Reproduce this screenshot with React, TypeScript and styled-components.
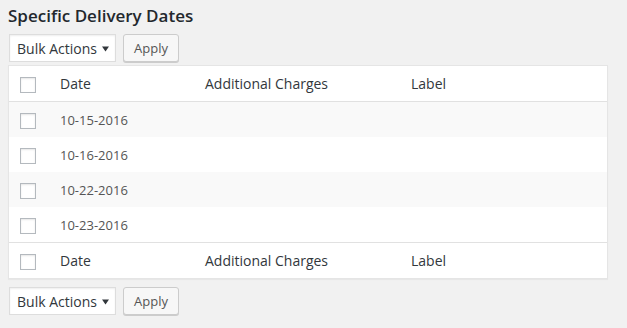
import React from "react";
import styled, { createGlobalStyle } from "styled-components";

const GlobalStyle = createGlobalStyle`
  html, body {
    margin: 0;
    padding: 0;
    background: #f1f1f1;
  }
  body {
    font-family: "Open Sans", "Liberation Sans", Arial, sans-serif;
    color: #444;
    -webkit-font-smoothing: antialiased;
  }
`;

const Wrap = styled.div`
  padding: 0 19px 0 8px;
`;

const Title = styled.h2`
  margin: 0;
  padding-top: 4px;
  font-size: 17px;
  line-height: 24px;
  font-weight: 600;
  color: #23282d;
`;

const TableNav = styled.div<{ $top?: boolean }>`
  display: flex;
  align-items: flex-start;
  gap: 6px;
  height: 30px;
  margin-top: ${(p) => (p.$top ? "5px" : "7px")};
  margin-bottom: ${(p) => (p.$top ? "2px" : "0")};
`;

const Select = styled.div`
  margin: 1px;
  box-sizing: border-box;
  width: 107px;
  height: 28px;
  display: flex;
  align-items: center;
  justify-content: space-between;
  padding: 0 6px 0 7px;
  background: #fff;
  border: 1px solid #ddd;
  box-shadow: inset 0 1px 2px rgba(0, 0, 0, 0.07);
  font-size: 14px;
  color: #32373c;
`;

const Arrow = styled.svg`
  width: 7px;
  height: 6px;
  margin-top: 1px;
`;

const Button = styled.button`
  margin-top: 1px;
  box-sizing: border-box;
  height: 28px;
  padding: 0 10px 1px;
  line-height: 26px;
  font-family: inherit;
  font-size: 13px;
  color: #555;
  background: #f7f7f7;
  border: 1px solid #ccc;
  border-radius: 3px;
  box-shadow: 0 1px 0 #ccc;
  cursor: pointer;
`;

const Table = styled.div`
  background: #fff;
  border: 1px solid #e5e5e5;
  box-shadow: 0 1px 1px rgba(0, 0, 0, 0.04);
`;

const Row = styled.div<{ $kind: "head" | "foot" | "odd" | "even" }>`
  display: grid;
  grid-template-columns: 41px 145px 206px 1fr;
  height: 35px;
  background: ${(p) => (p.$kind === "odd" ? "#f9f9f9" : "#fff")};
  border-bottom: ${(p) => (p.$kind === "head" ? "1px solid #e1e1e1" : "none")};
  border-top: ${(p) => (p.$kind === "foot" ? "1px solid #e1e1e1" : "none")};
  font-size: ${(p) => (p.$kind === "head" || p.$kind === "foot" ? "14px" : "13px")};
  color: ${(p) => (p.$kind === "head" || p.$kind === "foot" ? "#32373c" : "#555")};
`;

const Cell = styled.div`
  display: flex;
  align-items: center;
  padding: 0 10px;
  white-space: nowrap;
`;

const CheckCell = styled.div`
  display: flex;
  align-items: center;
  padding: 3px 0 0 11px;
`;

const Checkbox = styled.span`
  box-sizing: border-box;
  width: 16px;
  height: 16px;
  background: #fff;
  border: 1px solid #b4b9be;
  box-shadow: inset 0 1px 2px rgba(0, 0, 0, 0.1);
`;

const Nav = () => (
  <>
    <Select>
      <span>Bulk Actions</span>
      <Arrow viewBox="0 0 7 6">
        <polygon points="0,0.5 7,0.5 3.5,5.5" fill="#32373c" />
      </Arrow>
    </Select>
    <Button>Apply</Button>
  </>
);

const dates = ["10-15-2016", "10-16-2016", "10-22-2016", "10-23-2016"];

const HeaderCells = () => (
  <>
    <CheckCell>
      <Checkbox />
    </CheckCell>
    <Cell>Date</Cell>
    <Cell>Additional Charges</Cell>
    <Cell>Label</Cell>
  </>
);

export default function App() {
  return (
    <>
      <GlobalStyle />
      <Wrap>
        <Title>Specific Delivery Dates</Title>
        <TableNav $top>
          <Nav />
        </TableNav>
        <Table>
          <Row $kind="head">
            <HeaderCells />
          </Row>
          {dates.map((d, i) => (
            <Row key={d} $kind={i % 2 === 0 ? "odd" : "even"}>
              <CheckCell>
                <Checkbox />
              </CheckCell>
              <Cell>{d}</Cell>
              <Cell />
              <Cell />
            </Row>
          ))}
          <Row $kind="foot">
            <HeaderCells />
          </Row>
        </Table>
        <TableNav>
          <Nav />
        </TableNav>
      </Wrap>
    </>
  );
}
